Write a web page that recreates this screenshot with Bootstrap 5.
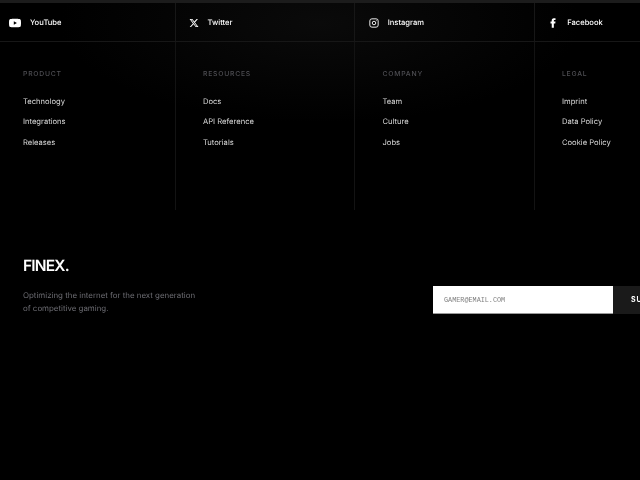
<!DOCTYPE html>
<html lang="en"><head><meta charset="utf-8"><title>Finex</title>
<link href="https://cdn.jsdelivr.net/npm/bootstrap@5.3.0/dist/css/bootstrap.min.css" rel="stylesheet">
<style>
html,body{background:#000;height:100%;overflow:hidden}
body{font-family:Inter,"Liberation Sans",sans-serif;color:#fff;text-rendering:geometricPrecision}
.fx-page{width:720px;height:480px;border-top:3px solid #1c1c1c;background:radial-gradient(ellipse 260px 100px at 320px 20px,#0a0a0a,#000);will-change:transform}
.fx-grid{display:grid;grid-template-columns:175.5px repeat(3,179.5px)}
.fx-social{height:38.5px;border-bottom:1px solid #171717;border-right:1px solid #171717;font-size:7.6px;font-weight:500;gap:9px;padding:2px 0 0 13.7px;color:#fff;text-decoration:none}
.fx-social:first-child{padding-left:9px}
.fx-social:nth-child(2){padding-left:13px}
.fx-social svg{width:10px;height:10px;flex:none}
.fx-social:first-child svg{width:12px;height:12px}
.fx-col{height:168px;border-right:1px solid #131313;padding:27px 0 0 27.5px}
.fx-col:first-child{padding-left:23px}
.fx-head{font-size:6.8px;letter-spacing:.78px;color:#4f4f54;font-weight:500;margin:0 0 18.5px;line-height:9px}
.fx-link{display:block;font-size:7.6px;line-height:11px;color:#d8d8d8;text-decoration:none;margin-bottom:9.3px}
.fx-bottom{padding:47px 0 0 23px;width:640px}
.fx-logo{font-size:15.5px;font-weight:600;letter-spacing:-.8px;line-height:18px;margin-bottom:14px}
.fx-tag{font-size:7.9px;line-height:13px;color:#6c6c72;width:180px;margin:0}
.fx-form{width:207px;height:28px;margin-top:29px;overflow:hidden;flex:none}
.fx-input{width:180px;height:28px;flex:none;background:#fff;border:0;border-bottom:1px solid #999;border-radius:0;font-family:"Liberation Mono",monospace;font-size:6.8px;padding:0 11px;color:#808080}
.fx-input::placeholder{color:#808080;opacity:1}
.fx-btn{background:#1a1a1a;color:#fff;border:0;border-radius:0;font-size:7px;font-weight:700;letter-spacing:1px;padding:0 0 0 18px;white-space:nowrap;flex:none;height:28px}
</style></head>
<body><div class="fx-page">
<div class="fx-grid">
<a class="fx-social d-flex align-items-center" href="#"><svg viewBox="0 0 24 24"><path fill="#fff" d="M23.5 6.200a3 3 0 0 0-2.100-2.100C19.500 3.500 12 3.500 12 3.500s-7.500 0-9.400.6A3 3 0 0 0 .5 6.200 31 31 0 0 0 0 12a31 31 0 0 0 .5 5.800 3 3 0 0 0 2.100 2.100c1.900.6 9.400.6 9.400.6s7.500 0 9.400-.6a3 3 0 0 0 2.100-2.100A31 31 0 0 0 24 12a31 31 0 0 0-.5-5.800zM9.600 15.600V8.400l6.200 3.600z"/></svg>YouTube</a>
<a class="fx-social d-flex align-items-center" href="#"><svg viewBox="0 0 24 24"><path fill="#fff" d="M18.200 2.300h3.300l-7.200 8.200 8.500 11.200h-6.700l-5.200-6.800-6 6.800H1.700l7.700-8.800L1.300 2.300h6.800l4.700 6.200zm-1.200 17.500h1.800L7.100 4.100h-2z"/></svg>Twitter</a>
<a class="fx-social d-flex align-items-center" href="#"><svg viewBox="0 0 24 24" fill="none" stroke="#fff" stroke-width="2.200"><rect x="2" y="2" width="20" height="20" rx="5"/><circle cx="12" cy="12" r="4.200"/><circle cx="17.600" cy="6.400" r=".6" fill="#fff" stroke-width="1"/></svg>Instagram</a>
<a class="fx-social d-flex align-items-center" href="#"><svg viewBox="0 0 24 24"><path fill="#fff" d="M14 8.500V6.300c0-1 .7-1.300 1.200-1.300H18V.5h-3.900C10.300.5 9 3.300 9 5.200v3.300H6v4.700h3V23.500h5V13.200h3.400l.6-4.700z"/></svg>Facebook</a>
</div>
<div class="fx-grid">
<div class="fx-col"><p class="fx-head">PRODUCT</p><a class="fx-link" href="#">Technology</a><a class="fx-link" href="#">Integrations</a><a class="fx-link" href="#">Releases</a></div>
<div class="fx-col"><p class="fx-head">RESOURCES</p><a class="fx-link" href="#">Docs</a><a class="fx-link" href="#">API Reference</a><a class="fx-link" href="#">Tutorials</a></div>
<div class="fx-col"><p class="fx-head">COMPANY</p><a class="fx-link" href="#">Team</a><a class="fx-link" href="#">Culture</a><a class="fx-link" href="#">Jobs</a></div>
<div class="fx-col"><p class="fx-head">LEGAL</p><a class="fx-link" href="#">Imprint</a><a class="fx-link" href="#">Data Policy</a><a class="fx-link" href="#">Cookie Policy</a></div>
</div>
<div class="fx-bottom d-flex justify-content-between align-items-center">
<div><div class="fx-logo">FINEX.</div><p class="fx-tag">Optimizing the internet for the next generation of competitive gaming.</p></div>
<form class="fx-form d-flex"><input class="fx-input" type="email" placeholder="GAMER@EMAIL.COM" aria-label="Email"><button class="fx-btn" type="button">SUBSCRIBE</button></form>
</div>
</div>
<script src="https://cdn.jsdelivr.net/npm/bootstrap@5.3.0/dist/js/bootstrap.bundle.min.js"></script>
</body></html>
